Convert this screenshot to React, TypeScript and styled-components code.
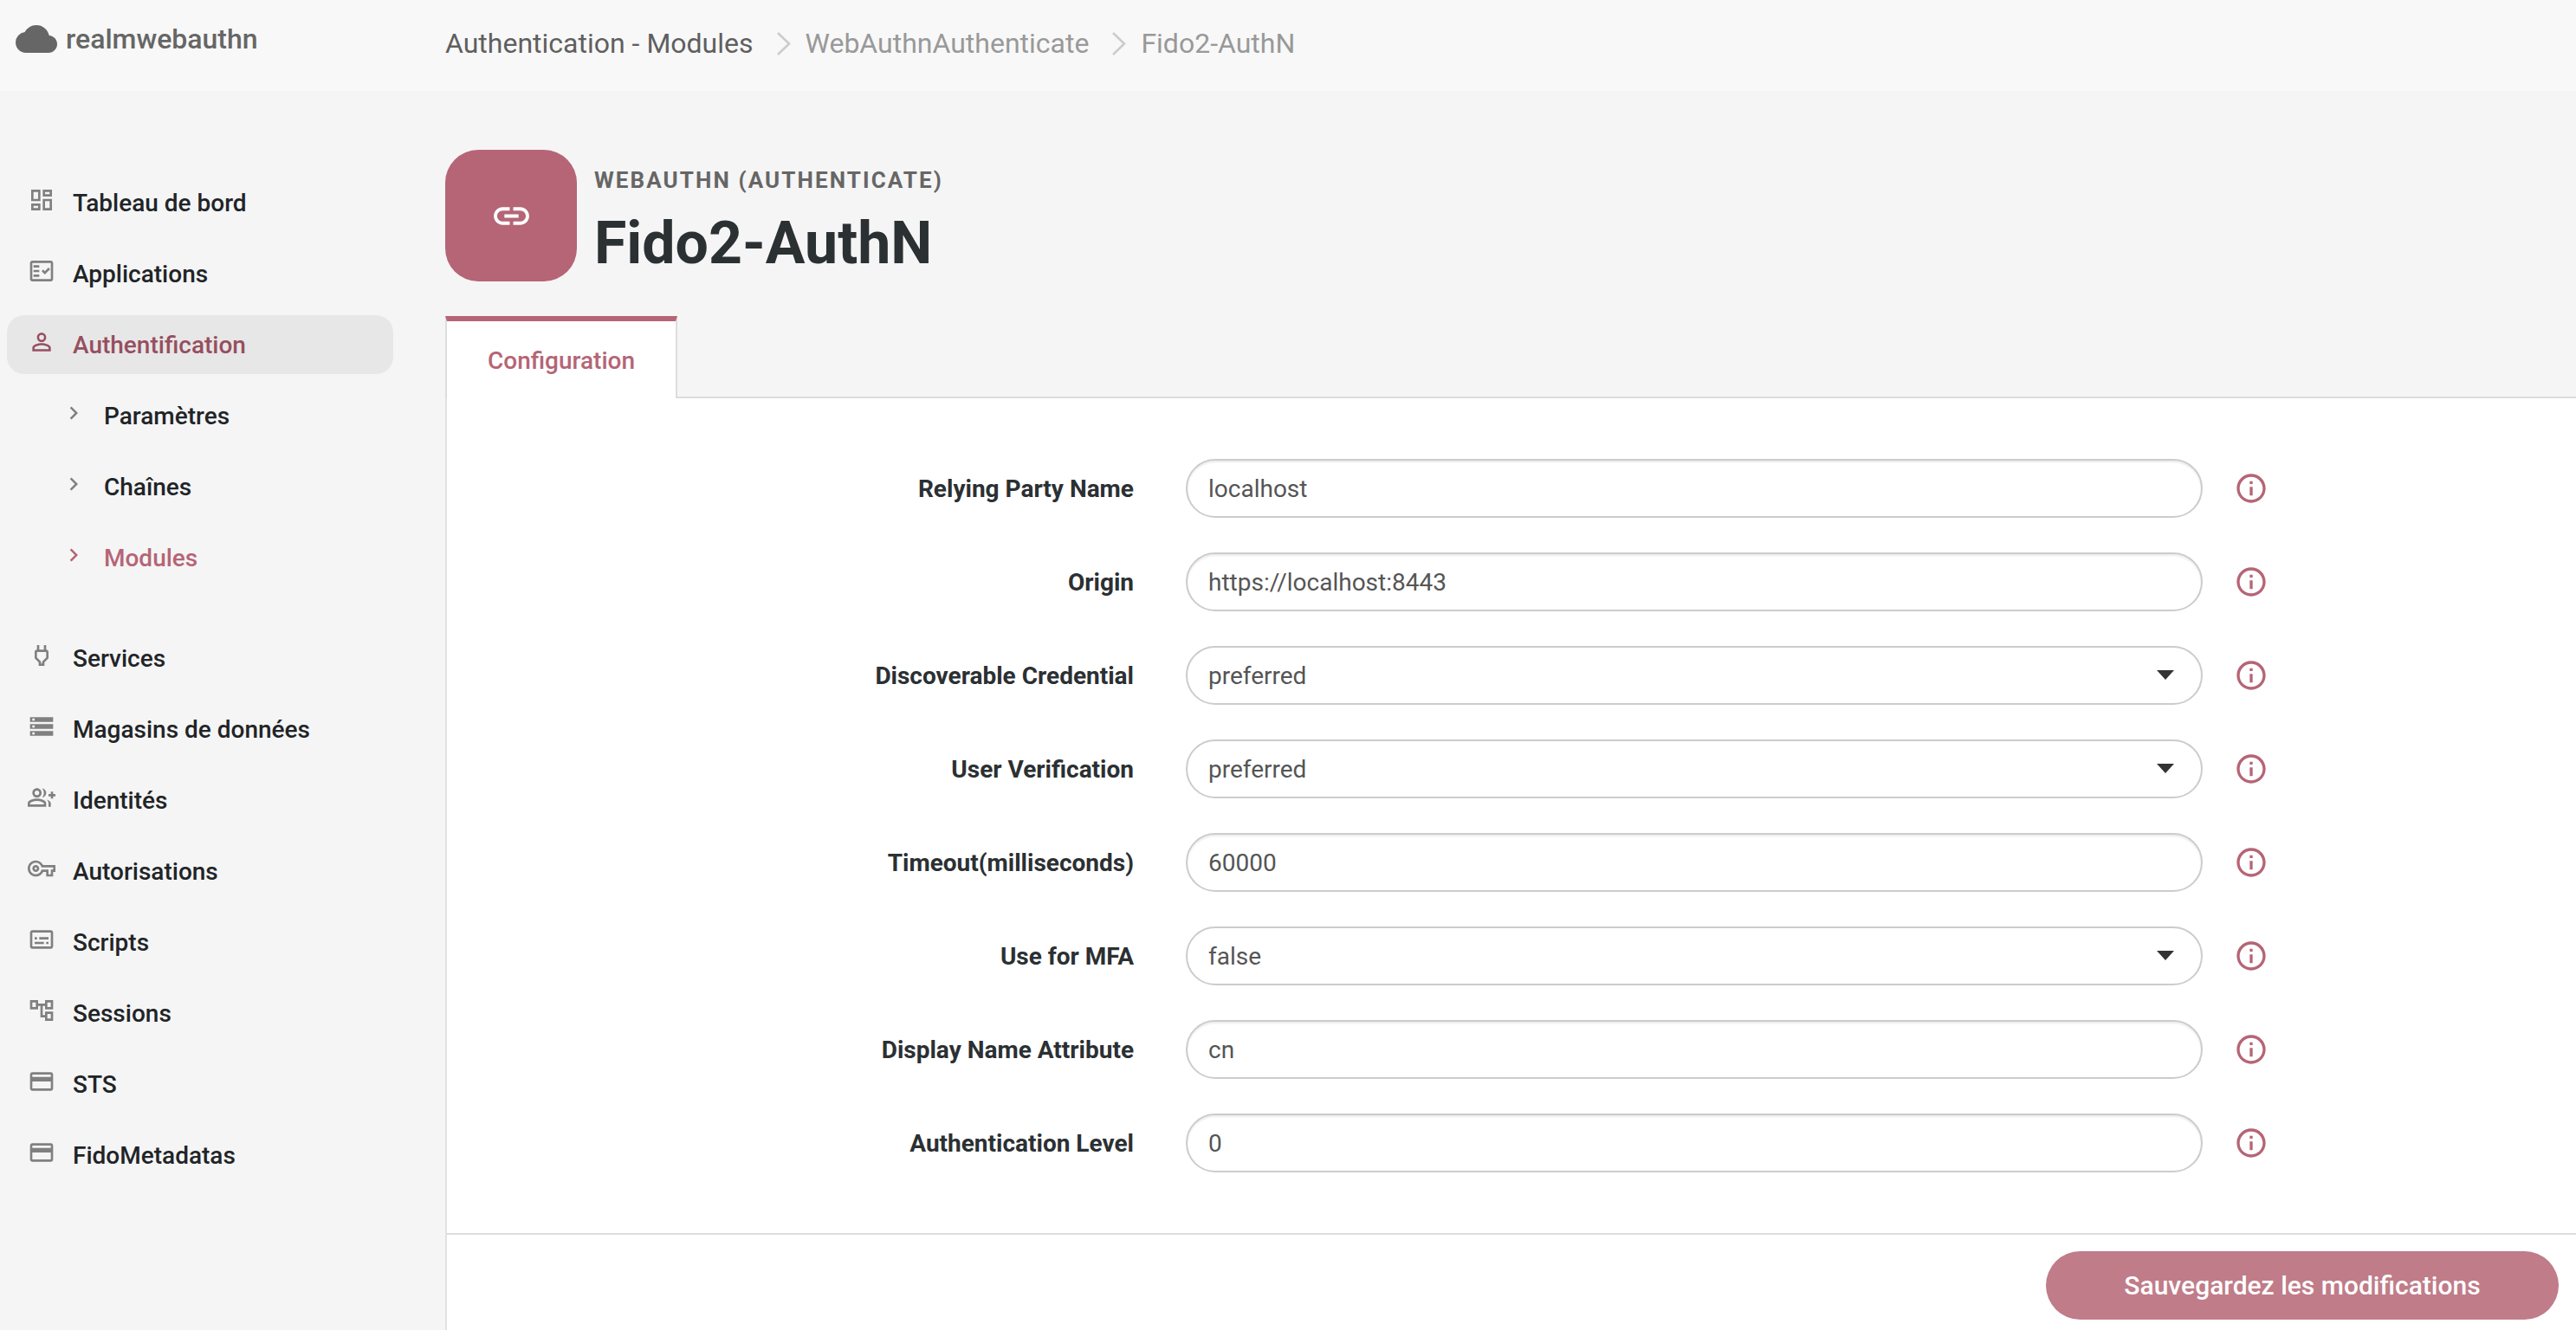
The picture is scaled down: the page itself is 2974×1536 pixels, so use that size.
//react
import { Fragment, ReactNode } from "react";

//styled-components
import styled, { createGlobalStyle } from "styled-components";

//icons
import {
  MdChevronRight,
  MdCloud,
  MdInfoOutline,
  MdLink,
  MdOutlineAccountTree,
  MdOutlineCreditCard,
  MdOutlineDashboard,
  MdOutlineFactCheck,
  MdOutlineGroupAdd,
  MdOutlinePower,
  MdOutlineSubtitles,
  MdOutlineVpnKey,
  MdPersonOutline,
  MdStorage,
} from "react-icons/md";

const GlobalStyle = createGlobalStyle`
  html, body {
    margin: 0;
    height: 100%;
    overflow: hidden;
    background: #f5f5f5;
    font-family: Roboto, "Liberation Sans", sans-serif;
  }
  * {
    box-sizing: border-box;
  }
`;

const Page = styled.div`
  width: 2974px;
  height: 1536px;
  display: flex;
  flex-direction: column;
`;

//top bar
const TopBar = styled.header`
  height: 105px;
  flex: none;
  display: flex;
  align-items: center;
  background-color: #f8f8f8;
`;

const Brand = styled.div`
  width: 514px;
  flex: none;
  padding: 0 0 15px 18px;
  display: flex;
  align-items: center;
  column-gap: 10px;
  color: #666666;
  font-size: 32px;
  font-weight: 500;
`;

const BrandIcon = styled(MdCloud)`
  width: 48px;
  height: 48px;
  flex: none;
`;

const Crumbs = styled.nav`
  display: flex;
  align-items: center;
  padding-bottom: 5px;
  font-size: 32px;
  color: #999999;
`;

const Crumb = styled.span<{ $current?: boolean }>`
  color: ${(props) => (props.$current ? "#5f5f5f" : "#999999")};
`;

const CrumbSeparator = styled.svg`
  width: 17px;
  height: 27px;
  margin: 0 17px 0 26px;
`;

//body
const Body = styled.div`
  flex: 1;
  min-height: 0;
  display: flex;
`;

const Sidebar = styled.aside`
  width: 514px;
  flex: none;
  padding: 95px 60px 0 8px;
  display: flex;
  flex-direction: column;
  background-color: #f5f5f5;
`;

const NavGroup = styled.ul`
  margin: 0 0 48px;
  padding: 0;
  list-style: none;
  display: flex;
  flex-direction: column;
  row-gap: 14px;
`;

const NavItem = styled.li<{ $active?: boolean }>`
  height: 68px;
  display: flex;
  align-items: center;
  padding-left: 24px;
  border-radius: 20px;
  font-size: 28px;
  font-weight: 500;
  color: ${(props) => (props.$active ? "#964f5f" : "#212427")};
  background-color: ${(props) => (props.$active ? "#e7e7e7" : "transparent")};

  svg {
    width: 32px;
    height: 32px;
    flex: none;
    margin: -6px 20px 0 0;
    color: ${(props) => (props.$active ? "#964f5f" : "#808080")};
  }
`;

const SubItem = styled.li<{ $active?: boolean }>`
  height: 68px;
  display: flex;
  align-items: center;
  padding-left: 62px;
  font-size: 28px;
  font-weight: 500;
  color: ${(props) => (props.$active ? "#b56576" : "#212427")};

  svg {
    width: 30px;
    height: 30px;
    flex: none;
    margin: -6px 20px 0 0;
    color: ${(props) => (props.$active ? "#b56576" : "#808080")};
  }
`;

//main
const Main = styled.main`
  flex: 1;
  min-width: 0;
  display: flex;
  flex-direction: column;
`;

const PageHead = styled.div`
  padding-top: 68px;
  display: flex;
  align-items: center;
  column-gap: 20px;
`;

const HeadIcon = styled.div`
  width: 152px;
  height: 152px;
  flex: none;
  display: flex;
  align-items: center;
  justify-content: center;
  border-radius: 38px;
  color: white;
  background-color: #b56576;

  svg {
    width: 49px;
    height: 49px;
  }
`;

const HeadText = styled.div`
  display: flex;
  flex-direction: column;
  margin-top: 15px;
`;

const Kicker = styled.div`
  font-size: 26px;
  font-weight: 700;
  letter-spacing: 2.1px;
  color: #666666;
`;

const Title = styled.h1`
  margin: 18px 0 0;
  font-size: 68px;
  line-height: 80px;
  font-weight: 700;
  color: #2b3033;
`;

const TabBar = styled.div`
  margin-top: 40px;
  display: flex;
  height: 95px;
  flex: none;
  border-bottom: 2px solid #dddddd;
`;

const Tab = styled.div`
  width: 268px;
  height: 95px;
  display: flex;
  align-items: center;
  justify-content: center;
  padding-top: 2px;
  border-top: 6px solid #b56576;
  border-left: 2px solid #dddddd;
  border-right: 2px solid #dddddd;
  font-size: 28px;
  font-weight: 500;
  color: #b56576;
  background-color: white;
`;

const Panel = styled.section`
  flex: 1;
  min-height: 0;
  display: flex;
  flex-direction: column;
  border-left: 2px solid #e2e2e2;
  background-color: white;
`;

const Form = styled.div`
  flex: 1;
  min-height: 0;
  padding-top: 70px;
  display: grid;
  grid-template-columns: 793px 1174px 34px;
  grid-auto-rows: 68px;
  column-gap: 60px;
  row-gap: 40px;
  align-items: center;
  align-content: start;
`;

const Label = styled.label`
  text-align: right;
  font-size: 28px;
  font-weight: 700;
  color: #2b3033;
`;

const Field = styled.div<{ $select?: boolean }>`
  height: 68px;
  display: flex;
  align-items: center;
  justify-content: space-between;
  padding: 0 31px 0 24px;
  border: 2.5px solid #cccccc;
  border-radius: 34px;
  font-size: 28px;
  color: #555555;
  background-color: white;
  box-shadow: ${(props) =>
    props.$select ? "none" : "inset 0 2px 2px rgba(0, 0, 0, 0.075)"};
`;

const Caret = styled.span`
  width: 0;
  height: 0;
  margin-top: -2px;
  border-left: 10px solid transparent;
  border-right: 10px solid transparent;
  border-top: 11px solid #333333;
`;

const InfoIcon = styled(MdInfoOutline)`
  width: 40px;
  height: 40px;
  margin-left: -24px;
  color: #b56576;
`;

const Footer = styled.footer`
  height: 112px;
  flex: none;
  padding: 19px 20px 0 0;
  display: flex;
  justify-content: flex-end;
  align-items: flex-start;
  border-top: 2px solid #dddddd;
`;

const SaveButton = styled.button`
  width: 592px;
  height: 79px;
  border: none;
  border-radius: 40px;
  font-family: inherit;
  font-size: 30px;
  font-weight: 500;
  color: white;
  background-color: #c07c89;
`;

//local type
interface FieldType {
  label: string;
  value: string;
  select?: boolean;
}

const fields: FieldType[] = [
  { label: "Relying Party Name", value: "localhost" },
  { label: "Origin", value: "https://localhost:8443" },
  { label: "Discoverable Credential", value: "preferred", select: true },
  { label: "User Verification", value: "preferred", select: true },
  { label: "Timeout(milliseconds)", value: "60000" },
  { label: "Use for MFA", value: "false", select: true },
  { label: "Display Name Attribute", value: "cn" },
  { label: "Authentication Level", value: "0" },
];

const bottomNav: { label: string; icon: ReactNode }[] = [
  { label: "Services", icon: <MdOutlinePower /> },
  { label: "Magasins de données", icon: <MdStorage /> },
  { label: "Identités", icon: <MdOutlineGroupAdd /> },
  { label: "Autorisations", icon: <MdOutlineVpnKey /> },
  { label: "Scripts", icon: <MdOutlineSubtitles /> },
  { label: "Sessions", icon: <MdOutlineAccountTree /> },
  { label: "STS", icon: <MdOutlineCreditCard /> },
  { label: "FidoMetadatas", icon: <MdOutlineCreditCard /> },
];

function Separator() {
  return (
    <CrumbSeparator viewBox="0 0 17 27" fill="none" stroke="#cccccc" strokeWidth="2.6">
      <polyline points="2,1 15,13.5 2,26" />
    </CrumbSeparator>
  );
}

export default function App() {
  return (
    <Page>
      <GlobalStyle />
      <TopBar>
        <Brand>
          <BrandIcon />
          realmwebauthn
        </Brand>
        <Crumbs>
          <Crumb $current>Authentication - Modules</Crumb>
          <Separator />
          <Crumb>WebAuthnAuthenticate</Crumb>
          <Separator />
          <Crumb>Fido2-AuthN</Crumb>
        </Crumbs>
      </TopBar>
      <Body>
        <Sidebar>
          <NavGroup>
            <NavItem>
              <MdOutlineDashboard />
              Tableau de bord
            </NavItem>
            <NavItem>
              <MdOutlineFactCheck />
              Applications
            </NavItem>
            <NavItem $active>
              <MdPersonOutline />
              Authentification
            </NavItem>
            <SubItem>
              <MdChevronRight />
              Paramètres
            </SubItem>
            <SubItem>
              <MdChevronRight />
              Chaînes
            </SubItem>
            <SubItem $active>
              <MdChevronRight />
              Modules
            </SubItem>
          </NavGroup>
          <NavGroup>
            {bottomNav.map((item) => (
              <NavItem key={item.label}>
                {item.icon}
                {item.label}
              </NavItem>
            ))}
          </NavGroup>
        </Sidebar>
        <Main>
          <PageHead>
            <HeadIcon>
              <MdLink />
            </HeadIcon>
            <HeadText>
              <Kicker>WEBAUTHN (AUTHENTICATE)</Kicker>
              <Title>Fido2-AuthN</Title>
            </HeadText>
          </PageHead>
          <TabBar>
            <Tab>Configuration</Tab>
          </TabBar>
          <Panel>
            <Form>
              {fields.map((field) => (
                <Fragment key={field.label}>
                  <Label>{field.label}</Label>
                  <Field $select={field.select}>
                    {field.value}
                    {field.select && <Caret />}
                  </Field>
                  <InfoIcon />
                </Fragment>
              ))}
            </Form>
            <Footer>
              <SaveButton>Sauvegardez les modifications</SaveButton>
            </Footer>
          </Panel>
        </Main>
      </Body>
    </Page>
  );
}
